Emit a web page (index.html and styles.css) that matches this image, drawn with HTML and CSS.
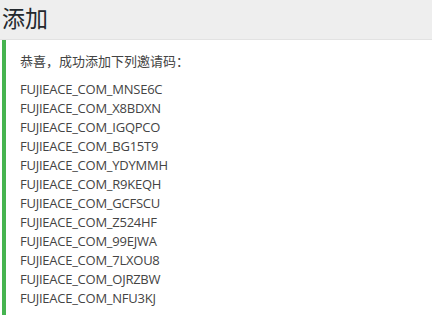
FILE: index.html
```html
<!DOCTYPE html>
<html lang="zh-CN">
<head>
    <meta charset="UTF-8">
    <title>添加</title>
    <link rel="stylesheet" href="styles.css">
</head>
<body>
    <div class="wrap">
        <h1 class="page-title">添加</h1>
        <div class="notice">
            <p>恭喜，成功添加下列邀请码：</p>
            <p class="codes">
                FUJIEACE_COM_MNSE6C<br>
                FUJIEACE_COM_X8BDXN<br>
                FUJIEACE_COM_IGQPCO<br>
                FUJIEACE_COM_BG15T9<br>
                FUJIEACE_COM_YDYMMH<br>
                FUJIEACE_COM_R9KEQH<br>
                FUJIEACE_COM_GCFSCU<br>
                FUJIEACE_COM_Z524HF<br>
                FUJIEACE_COM_99EJWA<br>
                FUJIEACE_COM_7LXOU8<br>
                FUJIEACE_COM_OJRZBW<br>
                FUJIEACE_COM_NFU3KJ
            </p>
        </div>
    </div>
</body>
</html>
```

FILE: styles.css
```css
* {
    box-sizing: border-box;
    margin: 0;
    padding: 0;
}

body {
    background-color: #fff;
    color: #444;
    font-family: 'Open Sans', 'Noto Sans CJK SC', sans-serif;
    font-size: 13px;
    line-height: 19px;
}

.page-title {
    height: 40px;
    padding: 4px 2px 0;
    background-color: #eee;
    border-bottom: 1px solid #e2e2e2;
    color: #23282d;
    font-size: 23px;
    font-weight: normal;
    line-height: 29px;
}

.notice {
    margin-left: 2px;
    padding: 3px 14px 0;
    border-left: 4px solid #46b450;
}

.notice p {
    margin: 9px 0;
}

.codes {
    padding-bottom: 12px;
    letter-spacing: -0.25px;
}
```
